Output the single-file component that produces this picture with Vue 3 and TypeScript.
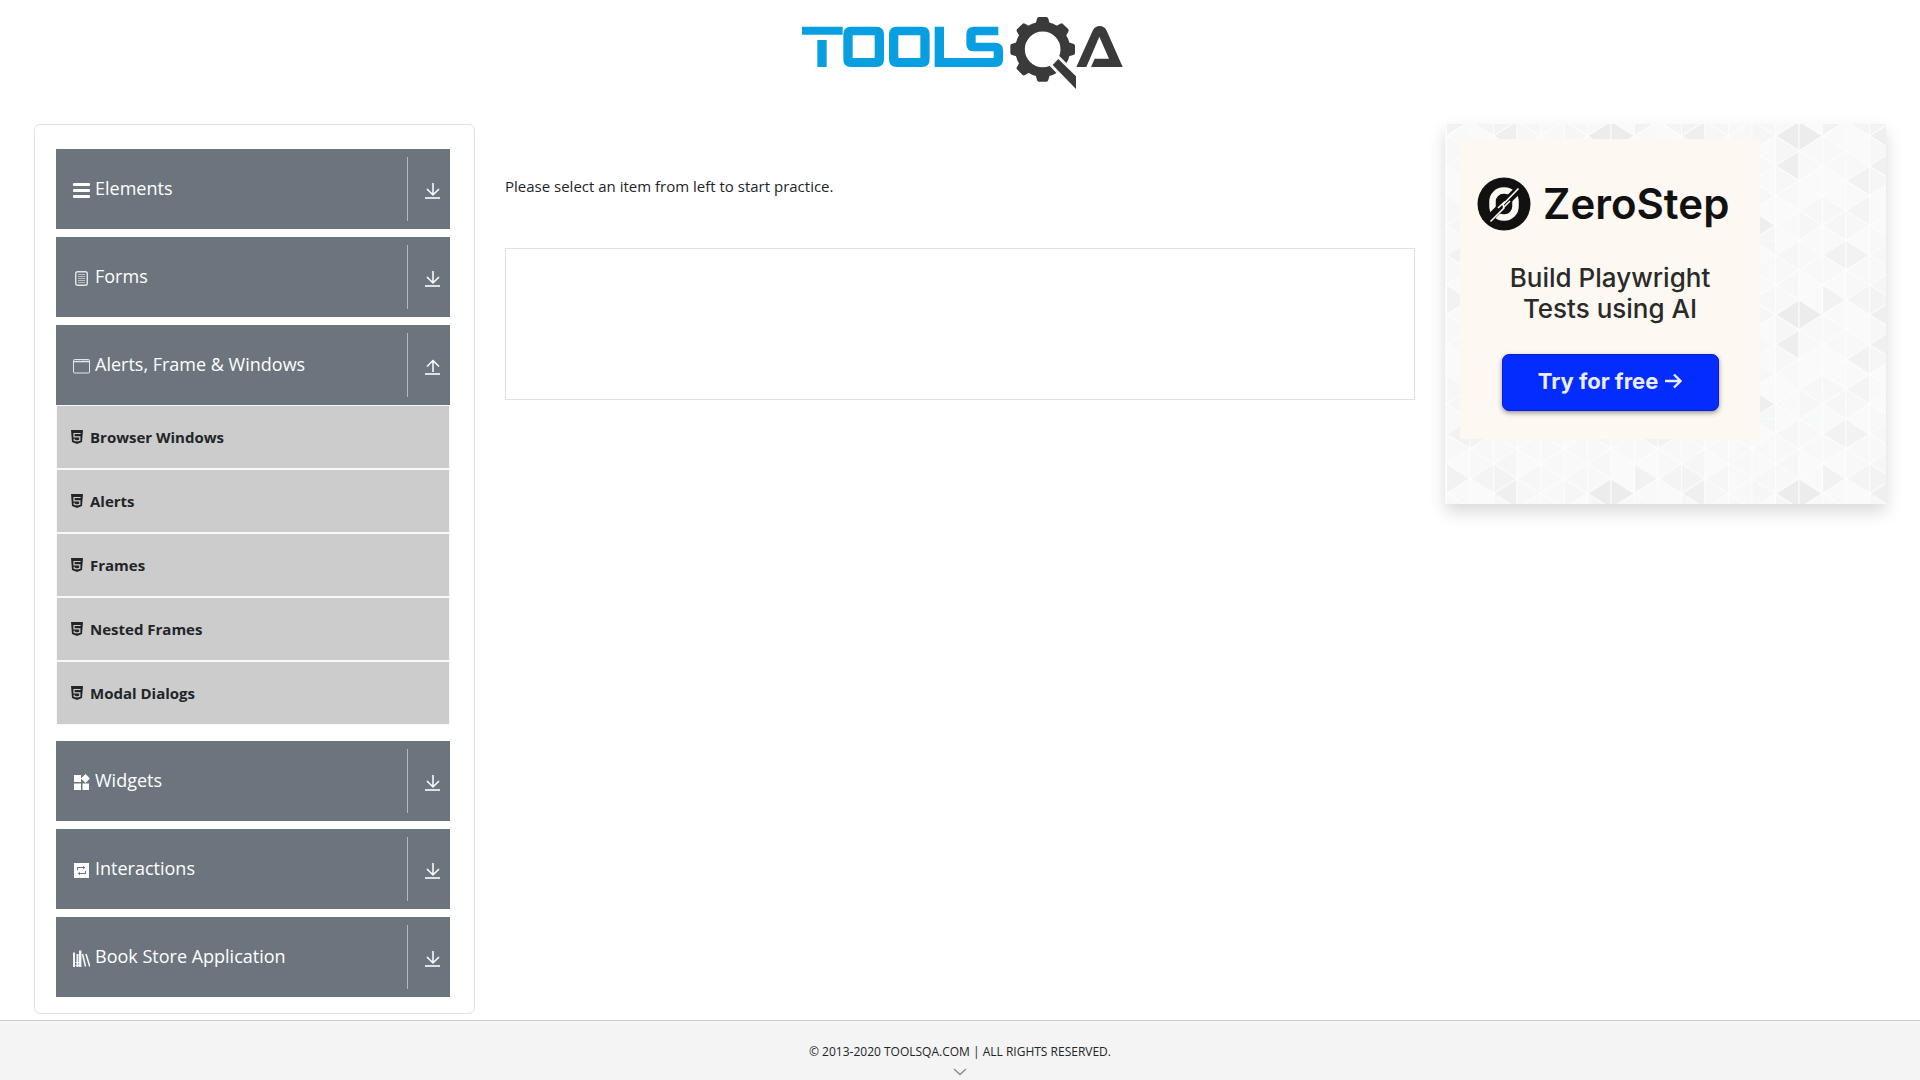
<script setup lang="ts">
import { ref } from 'vue'

interface Group {
  id: string
  title: string
  items: string[]
}

const groups: Group[] = [
  { id: 'elements', title: 'Elements', items: [] },
  { id: 'forms', title: 'Forms', items: [] },
  {
    id: 'alerts',
    title: 'Alerts, Frame & Windows',
    items: ['Browser Windows', 'Alerts', 'Frames', 'Nested Frames', 'Modal Dialogs'],
  },
  { id: 'widgets', title: 'Widgets', items: [] },
  { id: 'interactions', title: 'Interactions', items: [] },
  { id: 'books', title: 'Book Store Application', items: [] },
]

const openId = ref('alerts')
const toggle = (id: string) => {
  openId.value = openId.value === id ? '' : id
}

const teeth = [0, 45, 90, 180, 225, 270, 315]

// Triangular mosaic behind the banner: 8 strips across, 12 half-rows down
const STRIP = 23.5
const HALF = 14.9
const accents: Record<string, string> = {
  '6,0': '#ececec', '7,0': '#ececec', '2,0': '#efefef',
  '6,2': '#eeeeee', '2,2': '#f0f0f0', '1,3': '#f2f2f2',
  '5,6': '#eeeeee', '1,5': '#f4f4f4', '0,8': '#f2f2f2',
  '1,8': '#f2f2f2', '0,11': '#f2f2f2', '1,11': '#f4f4f4', '2,11': '#f3f3f3',
}
const shades = ['#f9f9f9', '#f7f7f7', '#fafafa', '#f8f8f8', '#f6f6f6', '#fafafa', '#f8f8f8']

const triangles: { points: string; fill: string }[] = []
for (let k = -1; k < 9; k++) {
  for (let m = -2; m < 14; m++) {
    const strip = (k + 8) % 8
    const row = (m + 12) % 12
    const left = 1.5 + k * STRIP
    const right = left + STRIP
    const y = 12 + m * HALF
    const apexLeft = Math.abs(m) % 2 === Math.abs(k) % 2
    const apex = apexLeft ? left : right
    const base = apexLeft ? right : left
    triangles.push({
      points: `${apex},${y} ${base},${y - HALF} ${base},${y + HALF}`,
      fill: accents[`${strip},${row}`] ?? shades[(strip * 5 + row * 3 + strip * row) % 7],
    })
  }
}
</script>

<template>
  <div class="page">
    <header class="top">
      <a href="#" aria-label="Home">
        <svg class="logo" viewBox="-15 0 1050 330">
          <g fill="#089fe0">
            <path d="M36 80H158V104H36Z M82 120H110V201H82Z" />
            <path fill-rule="evenodd" d="M183 80H259Q282 80 282 103V178Q282 201 259 201H183Q160 201 160 178V103Q160 80 183 80Z M188 106V174H254V106Z" />
            <path fill-rule="evenodd" d="M320 80H396Q419 80 419 103V178Q419 201 396 201H320Q297 201 297 178V103Q297 80 320 80Z M325 106V174H391V106Z" />
            <path d="M434 80H462V174H611V154H552Q529 154 529 131V103Q529 80 552 80H625V106H557V128H616Q639 128 639 151V178Q639 201 616 201H434Z" />
          </g>
          <g fill="#3a3a3b">
            <circle cx="758" cy="148" r="68" fill="none" stroke="#3a3a3b" stroke-width="29" />
            <path
              v-for="angle in teeth"
              :key="angle"
              d="M736 74L741 56Q742 51 747 51H769Q774 51 775 56L780 74Z"
              :transform="`rotate(${angle} 758 148)`"
            />
            <path d="M805 177L858 229V267L788 195Z" fill="#fff" stroke="#fff" stroke-width="17" />
            <path d="M805 177L858 229V267L788 195Z" />
            <path d="M859 201L908 92Q915 78 929 78Q943 78 950 92L998 201H903L914 176H957L928 110L889 201Z" />
          </g>
        </svg>
      </a>
    </header>

    <div class="row">
      <aside>
        <nav class="panel" aria-label="Practice sections">
          <section v-for="group in groups" :key="group.id">
            <button class="bar" type="button" :aria-expanded="openId === group.id" @click="toggle(group.id)">
              <svg class="glyph" viewBox="0 0 18 18" fill="#fff">
                <g v-if="group.id === 'elements'">
                  <rect x="1" y="2" width="17" height="3" rx="1" />
                  <rect x="1" y="8" width="17" height="3" rx="1" />
                  <rect x="1" y="14" width="17" height="3" rx="1" />
                </g>
                <g v-else-if="group.id === 'forms'" fill="none" stroke="#e4e6e8">
                  <rect x="3.7" y="2.7" width="11.6" height="13.6" rx="2" stroke-width="1.4" />
                  <path d="M6 5.5H13 M6 7.5H13 M6 9.5H13 M6 11.5H13 M6 13.5H13" stroke="#b9bdc2" />
                </g>
                <g v-else-if="group.id === 'alerts'" fill="none" stroke="#e4e6e8">
                  <rect x="1.5" y="2.5" width="16" height="13.5" rx="1" />
                  <path d="M1.5 4.5H17.5" stroke-width="1.6" />
                  <path d="M3.5 3V4 M6 3V4 M8.5 3V4" stroke="#6c757d" />
                </g>
                <g v-else-if="group.id === 'widgets'">
                  <path d="M2 2H9V9H2Z M2 10.5H9V17H2Z M10.5 10.5H17V17H10.5Z" />
                  <path d="M13.5 1L18 5.5L13.5 10L9 5.5Z" />
                </g>
                <g v-else-if="group.id === 'interactions'">
                  <path d="M2 2H17V17H2Z" />
                  <g fill="none" stroke="#6c757d" stroke-width="1.1">
                    <path d="M5.5 9V6.5H11.5 M13.5 10V12.5H7.5" />
                    <path d="M11 4.7L13.2 6.5L11 8.3Z M8 10.7L5.8 12.5L8 14.3Z" fill="#6c757d" stroke="none" />
                  </g>
                </g>
                <g v-else fill="none" stroke="#f4f5f6">
                  <path d="M2 3.5V18 M5.5 5V18" stroke-width="2" />
                  <path d="M3.5 16.5H9 M3.5 13.5H9" stroke-width="1" />
                  <path d="M8.2 1.5V18" stroke-width="2.4" />
                  <path d="M10.5 5L13.5 17.5 M14 5L17.8 17.5" stroke-width="1.6" />
                </g>
              </svg>
              <span class="title">{{ group.title }}</span>
              <span class="arrow">
                <svg viewBox="0 0 16 16" fill="none" stroke="#fff" stroke-width="1.5">
                  <path v-if="openId === group.id" d="M8 13V1.5 M2 7.5L8 1.5L14 7.5" />
                  <path v-else d="M8 0V12 M2 6L8 12L14 6" />
                  <path d="M0 15H15" stroke="#dfe1e3" stroke-width="2" />
                </svg>
              </span>
            </button>
            <ul v-if="openId === group.id && group.items.length" class="menu">
              <li v-for="item in group.items" :key="item">
                <a href="#" class="item">
                  <svg class="shield" viewBox="0 0 12 14">
                    <path d="M0 0H12L11 12L6 14L1 12Z" fill="#212529" />
                    <path d="M9.6 3.5H3V6.8H8.8V10.2L6 11L3.2 10.2V8.8" fill="none" stroke="#ccc" stroke-width="1.2" />
                  </svg>
                  <span>{{ item }}</span>
                </a>
              </li>
            </ul>
          </section>
        </nav>
      </aside>

      <main class="main">
        <p class="hint">Please select an item from left to start practice.</p>
        <div class="slot"></div>
      </main>

      <aside>
        <div class="promo">
          <svg class="mosaic" aria-hidden="true">
            <defs>
              <pattern id="mosaic" width="188" height="178.8" patternUnits="userSpaceOnUse">
                <polygon
                  v-for="(t, i) in triangles"
                  :key="i"
                  :points="t.points"
                  :fill="t.fill"
                  stroke="#fdfdfd"
                  stroke-width="1"
                />
                <path d="M129 116H142M170 116H188" stroke="#ebffff" stroke-width="2" />
              </pattern>
            </defs>
            <rect width="100%" height="100%" fill="url(#mosaic)" />
          </svg>
          <div class="ad">
            <div class="brand">
              <svg viewBox="0 0 54 54">
                <circle cx="27" cy="27" r="26.5" fill="#111" />
                <rect x="15.5" y="13.5" width="23" height="27" rx="11" fill="none" stroke="#fdf8f1" stroke-width="6.5" />
                <path d="M10 44L44 10" stroke="#111" stroke-width="8" />
                <path d="M13.5 44.5L27 31L26 27.5L41.5 11.5M21 31L28 24.5M26 31L33 24" fill="none" stroke="#fdf8f1" stroke-width="1.6" />
              </svg>
              <span>ZeroStep</span>
            </div>
            <p class="pitch">Build Playwright<br />Tests using AI</p>
            <button type="button" class="cta">
              Try for free
              <svg viewBox="0 0 17 16" fill="none" stroke="#e9edff" stroke-width="2.4">
                <path d="M0 8H15M9 1.5L15.5 8L9 14.5" />
              </svg>
            </button>
          </div>
        </div>
      </aside>
    </div>

    <footer class="foot">
      <span>© 2013-2020 TOOLSQA.COM | ALL RIGHTS RESERVED.</span>
      <svg viewBox="0 0 14 8" fill="none" stroke="#8a8a8a" stroke-width="1.4">
        <path d="M1 1L7 6.5L13 1" />
      </svg>
    </footer>
  </div>
</template>

<style>
body {
  background: #fff;
}
</style>

<style scoped>
* {
  box-sizing: border-box;
}

.page {
  display: flex;
  flex-direction: column;
  min-height: 100vh;
  font-family: 'Open Sans', 'Noto Sans', sans-serif;
  font-size: 15px;
  line-height: 24px;
  color: #212529;
}

.top {
  display: flex;
  justify-content: center;
  height: 124px;
}

.logo {
  display: block;
  width: 350px;
  height: 110px;
}

.row {
  display: grid;
  grid-template-columns: 441fr 910fr 441fr;
  gap: 30px;
  flex: 1;
  align-items: start;
  padding: 0 34px;
}

.panel {
  display: flex;
  flex-direction: column;
  gap: 8px;
  padding: 24px 24px 16px 21px;
  border: 1px solid #dee2e6;
  border-radius: 6px;
}

.bar {
  display: flex;
  align-items: center;
  width: 100%;
  height: 80px;
  padding: 0 9px 0 16px;
  border: 0;
  background: #6c757d;
  color: #fff;
  font: inherit;
  font-size: 18px;
  text-align: left;
  cursor: pointer;
}

.glyph {
  width: 18px;
  height: 18px;
  margin-top: 2px;
}

.title {
  flex: 1;
  margin-left: 5px;
  padding-bottom: 2px;
}

.arrow {
  display: flex;
  align-items: center;
  height: 64px;
  padding: 4px 0 0 17px;
  border-left: 1px solid #b5babe;
}

.arrow svg {
  width: 16px;
  height: 16px;
}

.menu {
  margin: 0;
  padding: 0 0 8px;
  list-style: none;
}

.item {
  display: flex;
  align-items: center;
  gap: 7px;
  height: 64px;
  padding: 0 14px;
  border: 1px solid #f8f8f8;
  background: #ccc;
  color: #212529;
  font-weight: 700;
  text-decoration: none;
}

.shield {
  width: 12px;
  height: 14px;
}

.main {
  padding-top: 50px;
}

.hint {
  margin: 0 0 50px;
}

.slot {
  height: 152px;
  border: 1px solid #e0e0e0;
}

.promo {
  position: relative;
  height: 380px;
  padding: 15px;
  box-shadow: 0 8px 16px rgba(0, 0, 0, 0.15);
}

.mosaic {
  position: absolute;
  inset: 0;
  width: 100%;
  height: 100%;
}

.ad {
  position: relative;
  display: flex;
  flex-direction: column;
  align-items: center;
  width: 300px;
  height: 300px;
  padding-top: 38px;
  background: #fdf8f1;
  font-family: Inter, sans-serif;
}

.brand {
  display: flex;
  align-items: center;
  align-self: flex-start;
  gap: 12px;
  padding-left: 17px;
  color: #111;
  font-size: 42px;
  font-weight: 600;
  line-height: 54px;
}

.brand svg {
  width: 54px;
  height: 54px;
}

.pitch {
  margin: 31px 0 0;
  color: #2a2a2a;
  font-size: 26px;
  font-weight: 500;
  line-height: 31px;
  text-align: center;
}

.cta {
  display: flex;
  align-items: center;
  justify-content: center;
  gap: 7px;
  width: 217px;
  height: 57px;
  margin-top: 30px;
  padding: 0 0 4px;
  border: 1px solid #0a1fd0;
  border-radius: 7px;
  background: #052cff;
  box-shadow: 0 2px 5px rgba(0, 0, 0, 0.4);
  color: #e9edff;
  font: inherit;
  font-size: 22px;
  font-weight: 700;
}

.cta svg {
  width: 17px;
  height: 16px;
}

.foot {
  display: flex;
  flex-direction: column;
  align-items: center;
  gap: 4px;
  height: 60px;
  padding-top: 19px;
  border-top: 1px solid #ccc;
  background: #f4f4f4;
  font-size: 12px;
}

.foot svg {
  width: 14px;
  height: 8px;
  flex: none;
}
</style>
